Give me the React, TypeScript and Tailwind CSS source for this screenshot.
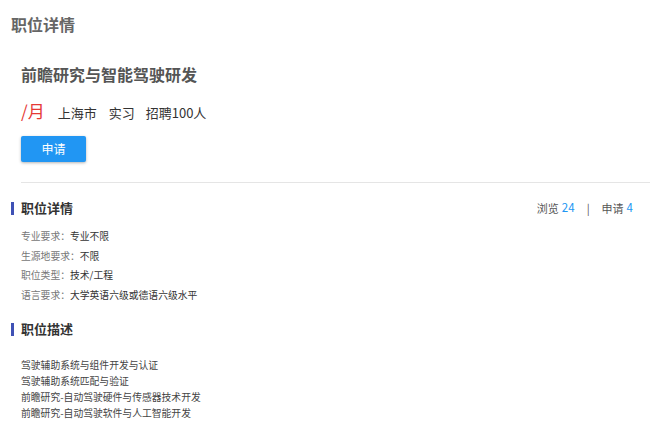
import React from "react";

const font = { fontFamily: '"Noto Sans CJK SC", "Liberation Sans", sans-serif' };

function Section({ title }: { title: string }) {
  return (
    <div className="flex items-center">
      <div className="w-[3px] h-[13px] bg-[#3f51b5]" />
      <div className="ml-[7px] text-[13px] font-bold text-[#333] leading-[20px]">{title}</div>
    </div>
  );
}

export default function App() {
  const reqs = [
    ["专业要求：", "专业不限"],
    ["生源地要求：", "不限"],
    ["职位类型：", "技术/工程"],
    ["语言要求：", "大学英语六级或德语六级水平"],
  ];
  const desc = [
    "驾驶辅助系统与组件开发与认证",
    "驾驶辅助系统匹配与验证",
    "前瞻研究-自动驾驶硬件与传感器技术开发",
    "前瞻研究-自动驾驶软件与人工智能开发",
  ];
  return (
    <div className="w-[650px] h-[440px] bg-white overflow-hidden" style={font}>
      <div className="pl-[11px] pt-[12px] text-[16px] font-bold text-[#666] leading-[24px]">职位详情</div>
      <div className="pl-[21px] pt-[26px]">
        <div className="text-[16px] font-bold text-[#555] leading-[24px]">前瞻研究与智能驾驶研发</div>
        <div className="mt-[12px] flex items-baseline h-[26px]">
          <span className="text-[17px] text-[#e53935] leading-[26px]">/月</span>
          <span className="ml-[13px] text-[13px] text-[#333]">上海市</span>
          <span className="ml-[12px] text-[13px] text-[#333]">实习</span>
          <span className="ml-[11px] text-[13px] text-[#333]">招聘100人</span>
        </div>
        <button className="mt-[12px] w-[65px] h-[26px] bg-[#2196f3] text-white text-[12px] rounded-[2px] shadow-[0_1px_3px_rgba(0,0,0,0.3)] flex items-center justify-center">
          申请
        </button>
        <div className="mt-[20px] h-px bg-[#e5e5e5]" />
      </div>
      <div className="pl-[11px] pr-[17px] pt-[15px] flex items-center justify-between">
        <Section title="职位详情" />
        <div className="flex items-center text-[11px] text-[#555]">
          <span>浏览</span>
          <span className="ml-[3px] text-[#2196f3] text-[11.5px]">24</span>
          <span className="ml-[12px] text-[#555]">|</span>
          <span className="ml-[12px]">申请</span>
          <span className="ml-[3px] text-[#2196f3] text-[11.5px]">4</span>
        </div>
      </div>
      <div className="pl-[21px] pt-[9px] flex flex-col">
        {reqs.map(([k, v]) => (
          <div key={k} className="text-[9.8px] leading-[19.5px]">
            <span className="text-[#777]">{k}</span>
            <span className="text-[#333]">{v}</span>
          </div>
        ))}
      </div>
      <div className="pl-[11px] pt-[14px]">
        <Section title="职位描述" />
      </div>
      <div className="pl-[21px] pt-[18px] flex flex-col">
        {desc.map((d) => (
          <div key={d} className="text-[9.8px] leading-[16px] text-[#444]">{d}</div>
        ))}
      </div>
    </div>
  );
}
